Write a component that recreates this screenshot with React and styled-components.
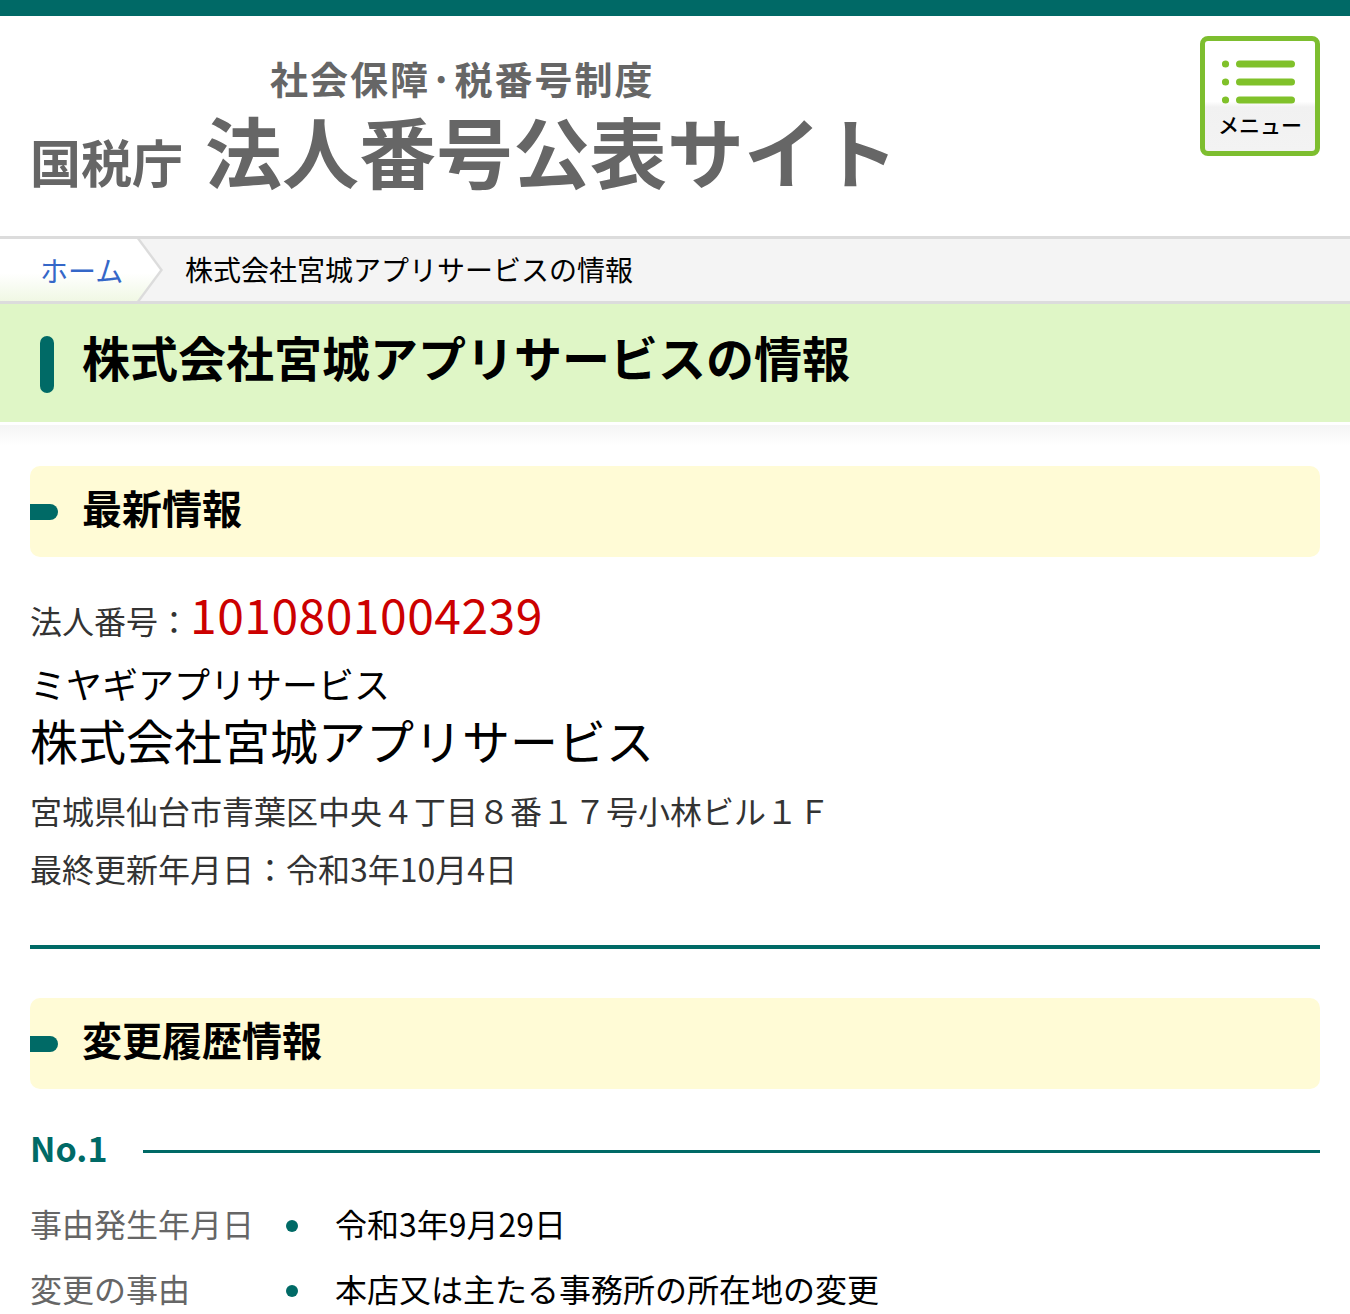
import React from "react";
import styled, { createGlobalStyle } from "styled-components";

const GlobalStyle = createGlobalStyle`
  html, body { margin: 0; padding: 0; background: #fff; }
  body {
    font-family: "Noto Sans CJK JP", "Noto Sans", sans-serif;
    color: #000;
  }
  * { box-sizing: border-box; }
`;

const TEAL = "#006a66";

const TopBar = styled.div`
  height: 16px;
  background: #006966;
`;

const Header = styled.header`
  height: 220px;
  display: flex;
  justify-content: space-between;
  align-items: flex-start;
  padding: 20px 30px 0 30px;
`;

const Logo = styled.div`
  margin-top: 22px;
  display: flex;
  flex-direction: column;
  color: #666;
  font-weight: 700;
`;

const LogoSub = styled.div`
  font-size: 38px;
  line-height: 40px;
  padding-left: 240px;
  letter-spacing: 2px;
`;

const LogoMain = styled.div`
  display: flex;
  align-items: baseline;
  gap: 22px;
  margin-top: 16px;
  line-height: 72px;
`;

const LogoAgency = styled.span`
  font-size: 51px;
`;

const LogoSite = styled.span`
  font-size: 77px;
`;

const MenuButton = styled.button`
  width: 120px;
  height: 120px;
  border: 5px solid #7dbe2f;
  border-radius: 8px;
  background: linear-gradient(#ffffff 0%, #ffffff 55%, #f1f1f1 60%, #f3f3f3 100%);
  display: flex;
  flex-direction: column;
  align-items: center;
  padding: 18px 0 0 0;
  margin: 0;
  cursor: pointer;
  font-family: inherit;
`;

const MenuLabel = styled.span`
  font-size: 21px;
  line-height: 24px;
  margin-top: 7px;
  color: #000;
  font-weight: 500;
`;

const Breadcrumb = styled.nav`
  display: flex;
  align-items: stretch;
  height: 68px;
  border-top: 3px solid #dcdcdc;
  border-bottom: 3px solid #dcdcdc;
  background: #f4f4f4;
`;

const HomeOuter = styled.div`
  background: #dcdcdc;
  padding-right: 3px;
  clip-path: polygon(0 0, calc(100% - 23px) 0, 100% 50%, calc(100% - 23px) 100%, 0 100%);
`;

const HomeInner = styled.a`
  display: flex;
  align-items: center;
  height: 100%;
  width: 160px;
  padding-left: 40px;
  font-size: 28px;
  color: #3567c8;
  text-decoration: none;
  background: linear-gradient(#ffffff 0%, #ffffff 55%, #f0f8e4 100%);
  clip-path: polygon(0 0, calc(100% - 23px) 0, 100% 50%, calc(100% - 23px) 100%, 0 100%);
`;

const CrumbCurrent = styled.span`
  display: flex;
  align-items: center;
  margin-left: 22px;
  font-size: 28px;
  color: #000;
  padding-bottom: 2px;
`;

const TitleBand = styled.div`
  height: 118px;
  background: #dff6c6;
  display: flex;
  align-items: center;
  padding-left: 40px;
  gap: 28px;
`;

const TitleBar = styled.span`
  width: 14px;
  height: 57px;
  border-radius: 7px;
  background: ${TEAL};
  margin-top: 2px;
`;

const Title = styled.h1`
  margin: 0 0 14px 0;
  font-size: 48px;
  line-height: 60px;
  font-weight: 700;
  color: #000;
`;

const Shade = styled.div`
  height: 20px;
  margin-top: 3px;
  background: linear-gradient(#f5f5f5, #ffffff);
`;

const Main = styled.main`
  padding: 0 30px;
`;

const SectionBox = styled.div`
  height: 91px;
  background: #fffbd6;
  border-radius: 10px;
  display: flex;
  align-items: center;
  gap: 24px;
  margin-top: ${(p) => p.$top}px;
`;

const SectionPill = styled.span`
  width: 28px;
  height: 16px;
  border-radius: 0 8px 8px 0;
  background: ${TEAL};
`;

const SectionTitle = styled.h2`
  margin: 0 0 10px 0;
  font-size: 40px;
  line-height: 50px;
  font-weight: 700;
  color: #000;
`;

const NumberRow = styled.div`
  margin-top: 24px;
  line-height: 64px;
  display: flex;
  align-items: baseline;
`;

const NumberLabel = styled.span`
  font-size: 32px;
  color: #333;
`;

const NumberValue = styled.span`
  font-size: 48px;
  color: #cc0000;
  letter-spacing: 0.5px;
`;

const Kana = styled.div`
  font-size: 36px;
  line-height: 52px;
  margin-top: 5px;
  color: #000;
`;

const Name = styled.div`
  font-size: 48px;
  line-height: 60px;
  color: #000;
`;

const InfoLine = styled.div`
  font-size: 32px;
  line-height: 58px;
  color: #333;
  margin-top: ${(p) => p.$top || 0}px;
`;

const Divider = styled.hr`
  margin: 48px 0 0 0;
  border: 0;
  height: 4px;
  background: ${TEAL};
`;

const HistoryHead = styled.div`
  margin-top: 35px;
  display: flex;
  align-items: center;
  gap: 36px;
  line-height: 48px;
`;

const HistoryNo = styled.span`
  font-size: 34px;
  font-weight: 700;
  color: ${TEAL};
`;

const HistoryRule = styled.span`
  flex: 1;
  height: 3px;
  background: ${TEAL};
  margin-top: 7px;
`;

const DefList = styled.dl`
  margin: 19px 0 0 0;
`;

const DefRow = styled.div`
  display: grid;
  grid-template-columns: 256px 12px 1fr;
  align-items: center;
  height: 65px;
  font-size: 32px;
`;

const DefTerm = styled.dt`
  color: #666;
  line-height: 65px;
`;

const DefBullet = styled.span`
  width: 12px;
  height: 12px;
  border-radius: 50%;
  background: ${TEAL};
  margin-top: 4px;
`;

const DefDesc = styled.dd`
  margin: 0;
  padding-left: 37px;
  color: #000;
  line-height: 65px;
`;

function MenuIcon() {
  return (
    <svg width="76" height="46" viewBox="0 0 76 46" aria-hidden="true">
      {[5, 23, 41].map((y) => (
        <g key={y}>
          <circle cx="3.5" cy={y} r="3.6" fill="#80c12a" />
          <line x1="17.5" y1={y} x2="69.5" y2={y} stroke="#80c12a" strokeWidth="7" strokeLinecap="round" />
        </g>
      ))}
    </svg>
  );
}

const history = [
  { term: "事由発生年月日", desc: "令和3年9月29日" },
  { term: "変更の事由", desc: "本店又は主たる事務所の所在地の変更" },
];

export default function App() {
  return (
    <>
      <GlobalStyle />
      <TopBar />
      <Header>
        <Logo>
          <LogoSub>社会保障·税番号制度</LogoSub>
          <LogoMain>
            <LogoAgency>国税庁</LogoAgency>
            <LogoSite>法人番号公表サイト</LogoSite>
          </LogoMain>
        </Logo>
        <MenuButton type="button">
          <MenuIcon />
          <MenuLabel>メニュー</MenuLabel>
        </MenuButton>
      </Header>
      <Breadcrumb>
        <HomeOuter>
          <HomeInner href="#">ホーム</HomeInner>
        </HomeOuter>
        <CrumbCurrent>株式会社宮城アプリサービスの情報</CrumbCurrent>
      </Breadcrumb>
      <TitleBand>
        <TitleBar />
        <Title>株式会社宮城アプリサービスの情報</Title>
      </TitleBand>
      <Shade />
      <Main>
        <SectionBox $top={21}>
          <SectionPill />
          <SectionTitle>最新情報</SectionTitle>
        </SectionBox>
        <NumberRow>
          <NumberLabel>法人番号：</NumberLabel>
          <NumberValue>1010801004239</NumberValue>
        </NumberRow>
        <Kana>ミヤギアプリサービス</Kana>
        <Name>株式会社宮城アプリサービス</Name>
        <InfoLine $top={12}>宮城県仙台市青葉区中央４丁目８番１７号小林ビル１Ｆ</InfoLine>
        <InfoLine>最終更新年月日：令和3年10月4日</InfoLine>
        <Divider />
        <SectionBox $top={49}>
          <SectionPill />
          <SectionTitle>変更履歴情報</SectionTitle>
        </SectionBox>
        <HistoryHead>
          <HistoryNo>No.1</HistoryNo>
          <HistoryRule />
        </HistoryHead>
        <DefList>
          {history.map((h) => (
            <DefRow key={h.term}>
              <DefTerm>{h.term}</DefTerm>
              <DefBullet />
              <DefDesc>{h.desc}</DefDesc>
            </DefRow>
          ))}
        </DefList>
      </Main>
    </>
  );
}
